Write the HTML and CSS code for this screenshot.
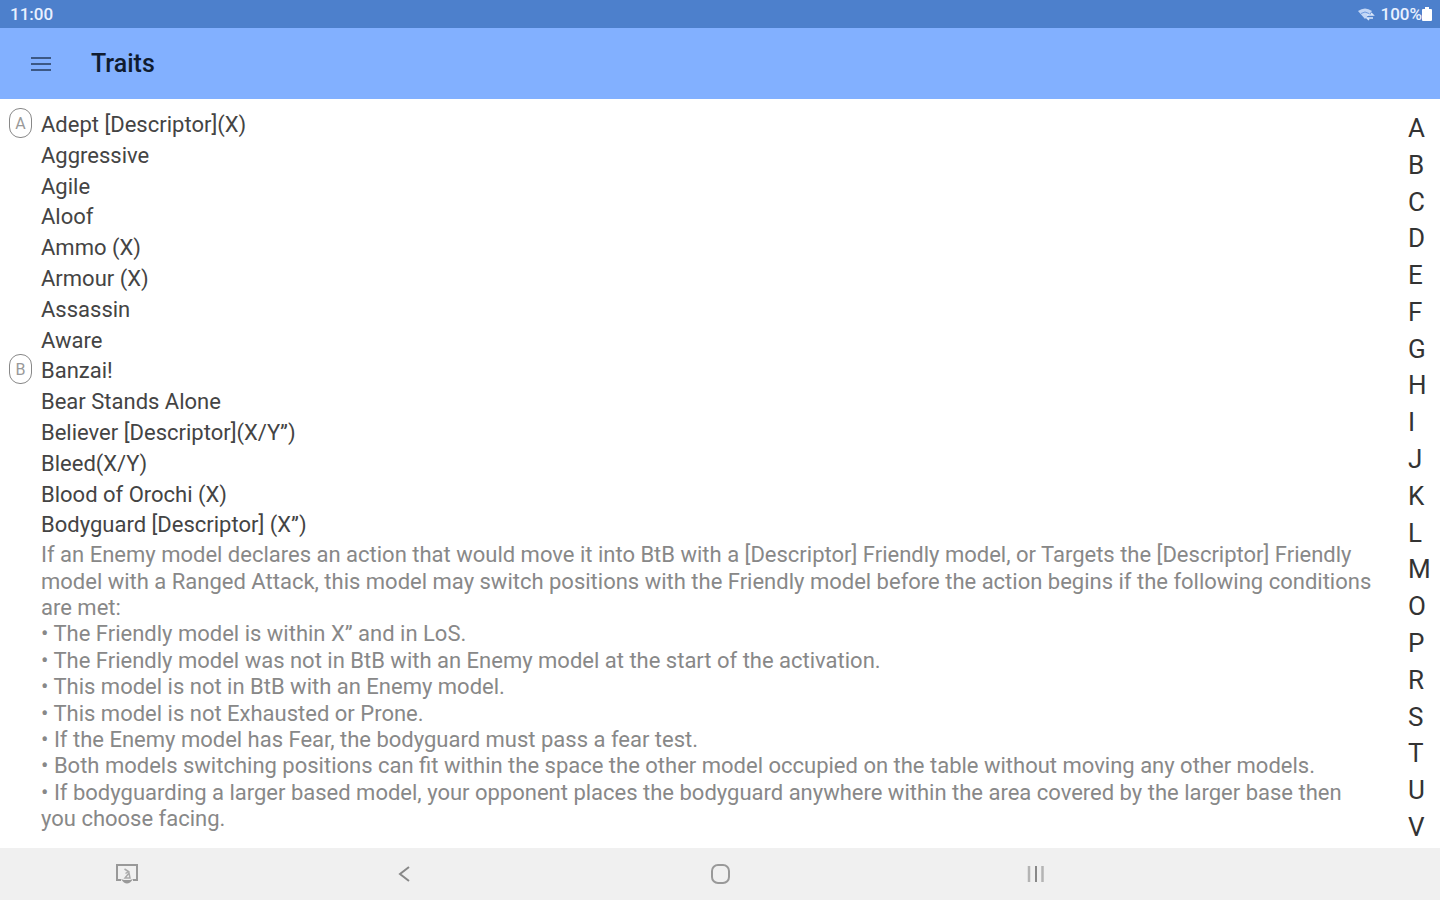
FILE: index.html
```html
<!DOCTYPE html>
<html lang="en">
	<head>
		<meta charset="UTF-8" />
		<meta name="viewport" content="width=device-width, initial-scale=1.0" />
		<title>Traits</title>
		<link rel="stylesheet" href="styles.css">
	</head>
	<body>
		<div class="status-bar">
			<span class="clock">11:00</span>
			<div class="status-icons">
				<svg class="wifi" width="18" height="14" viewBox="0 0 18 14" aria-hidden="true">
					<path d="M1 4Q8-1 15 4L8 12Z" fill="#c3d6f5" />
					<path d="M4 6.500Q8 3.500 12 6.500" fill="none" stroke="#6f9ade" stroke-width="1" />
					<path d="M10 8h6l-2-2M16 11h-6l2 2" fill="none" stroke="#dce8fb" stroke-width="1.500" />
				</svg>
				<span>100%</span>
				<svg class="battery" width="10" height="14" viewBox="0 0 10 14" aria-hidden="true">
					<path d="M3 0h4v2h2q1 0 1 1v10q0 1-1 1H1q-1 0-1-1V3q0-1 1-1h2z" fill="#fff" />
				</svg>
			</div>
		</div>

		<header class="app-bar">
			<button class="menu-btn" aria-label="Open menu">
				<svg width="22" height="18" viewBox="0 0 22 18" aria-hidden="true">
					<path d="M1 3h20M1 9h20M1 15h20" stroke="#3c5885" stroke-width="2" />
				</svg>
			</button>
			<h1>Traits</h1>
		</header>

		<main class="content">
			<div class="trait-list">
				<section class="group" id="group-a">
					<div class="badge">A</div>
					<div class="traits">
						<button class="trait">Adept [Descriptor](X)</button>
						<button class="trait">Aggressive</button>
						<button class="trait">Agile</button>
						<button class="trait">Aloof</button>
						<button class="trait">Ammo (X)</button>
						<button class="trait">Armour (X)</button>
						<button class="trait">Assassin</button>
						<button class="trait">Aware</button>
					</div>
				</section>

				<section class="group" id="group-b">
					<div class="badge">B</div>
					<div class="traits">
						<button class="trait">Banzai!</button>
						<button class="trait">Bear Stands Alone</button>
						<button class="trait">Believer [Descriptor](X/Y”)</button>
						<button class="trait">Bleed(X/Y)</button>
						<button class="trait">Blood of Orochi (X)</button>
						<button class="trait" aria-expanded="true" aria-controls="bodyguard">Bodyguard [Descriptor] (X”)</button>
						<div class="description" id="bodyguard">
							<p>If an Enemy model declares an action that would move it into BtB with a [Descriptor] Friendly model, or Targets the [Descriptor] Friendly model with a Ranged Attack, this model may switch positions with the Friendly model before the action begins if the following conditions are met:</p>
							<p>• The Friendly model is within X” and in LoS.</p>
							<p>• The Friendly model was not in BtB with an Enemy model at the start of the activation.</p>
							<p>• This model is not in BtB with an Enemy model.</p>
							<p>• This model is not Exhausted or Prone.</p>
							<p>• If the Enemy model has Fear, the bodyguard must pass a fear test.</p>
							<p>• Both models switching positions can fit within the space the other model occupied on the table without moving any other models.</p>
							<p>• If bodyguarding a larger based model, your opponent places the bodyguard anywhere within the area covered by the larger base then you choose facing.</p>
						</div>
					</div>
				</section>
			</div>

			<nav class="letter-index" aria-label="Jump to letter">
				<a href="#group-a">A</a>
				<a href="#group-b">B</a>
				<a href="#group-c">C</a>
				<a href="#group-d">D</a>
				<a href="#group-e">E</a>
				<a href="#group-f">F</a>
				<a href="#group-g">G</a>
				<a href="#group-h">H</a>
				<a href="#group-i">I</a>
				<a href="#group-j">J</a>
				<a href="#group-k">K</a>
				<a href="#group-l">L</a>
				<a href="#group-m">M</a>
				<a href="#group-o">O</a>
				<a href="#group-p">P</a>
				<a href="#group-r">R</a>
				<a href="#group-s">S</a>
				<a href="#group-t">T</a>
				<a href="#group-u">U</a>
				<a href="#group-v">V</a>
			</nav>
		</main>

		<footer class="nav-bar">
			<button class="cast-btn" aria-label="Cast screen">
				<svg width="24" height="22" viewBox="0 0 24 22" aria-hidden="true">
					<path d="M6 17H2V2h20v15h-4" fill="none" stroke="#999" stroke-width="2" />
					<path d="M6 16q6 9 12 0l-3 1H9z" fill="#999" />
					<path d="M9.500 6l4 2.500-3 2M14 10l-4 5h5z" fill="none" stroke="#aaa" stroke-width="1.500" />
				</svg>
			</button>
			<button aria-label="Back">
				<svg width="24" height="22" viewBox="0 0 24 22" aria-hidden="true">
					<path d="M17 4L8 11l9 7" fill="none" stroke="#888" stroke-width="2" />
				</svg>
			</button>
			<button aria-label="Home">
				<svg width="24" height="22" viewBox="0 0 24 22" aria-hidden="true">
					<rect x="4" y="2" width="17" height="18" rx="6" fill="none" stroke="#999" stroke-width="2" />
				</svg>
			</button>
			<button aria-label="Recent apps">
				<svg width="24" height="22" viewBox="0 0 24 22" aria-hidden="true">
					<path d="M5 3v16M18.500 3v16" stroke="#b4b4b4" stroke-width="2.500" />
					<path d="M12 3v16" stroke="#888" stroke-width="2" />
				</svg>
			</button>
		</footer>
	</body>
</html>
```
FILE: styles.css
```css
* {
	box-sizing: border-box;
}

body {
	font-family: Roboto, sans-serif;
	background-color: #fff;
	color: #444;
	display: flex;
	flex-direction: column;
	min-height: 100vh;
	margin: 0;
}

button {
	font: inherit;
	color: inherit;
	background: none;
	border: none;
	padding: 0;
	cursor: pointer;
}

svg {
	display: block;
}

.status-bar {
	display: flex;
	align-items: center;
	justify-content: space-between;
	height: 28px;
	padding: 0 8px 0 10px;
	background-color: #4d80cc;
	color: #e8f0ff;
	font-size: 17px;
	font-weight: 500;
}

.status-icons {
	display: flex;
	align-items: center;
}

.wifi {
	margin-right: 5px;
}

.app-bar {
	display: flex;
	align-items: center;
	gap: 39px;
	height: 71px;
	padding: 0 30px;
	background-color: #82b0ff;
}

.app-bar h1 {
	margin: 0;
	color: #101c30;
	font-size: 25px;
	font-weight: 500;
	line-height: 32px;
}

.content {
	flex: 1;
	display: flex;
}

.trait-list {
	flex: 1;
	padding: 11px 24px 0 9px;
}

.group {
	display: flex;
	align-items: flex-start;
	gap: 9px;
}

.badge {
	display: flex;
	align-items: center;
	justify-content: center;
	width: 23px;
	height: 30px;
	margin-top: -2px;
	border: 1px solid #888;
	border-radius: 11px;
	color: #999;
	font-size: 16px;
}

.traits {
	flex: 1;
}

.trait {
	display: block;
	width: 100%;
	font-size: 22px;
	line-height: 1.4;
	text-align: left;
}

.description {
	padding-top: 1px;
	color: #888;
	font-size: 22px;
	line-height: 1.2;
}

.description p {
	margin: 0;
}

.letter-index {
	display: flex;
	flex-direction: column;
	justify-content: space-between;
	width: 40px;
	padding: 14px 0 6px 8px;
	font-size: 26px;
	line-height: 30px;
}

.letter-index a {
	color: #333;
	text-decoration: none;
}

.nav-bar {
	display: grid;
	grid-template-columns: 246px 1fr 1fr 1fr 246px;
	height: 52px;
	background-color: #f0f0f0;
}

.nav-bar button {
	display: flex;
	align-items: center;
	justify-content: center;
}

.nav-bar .cast-btn {
	padding-left: 8px;
}
```
